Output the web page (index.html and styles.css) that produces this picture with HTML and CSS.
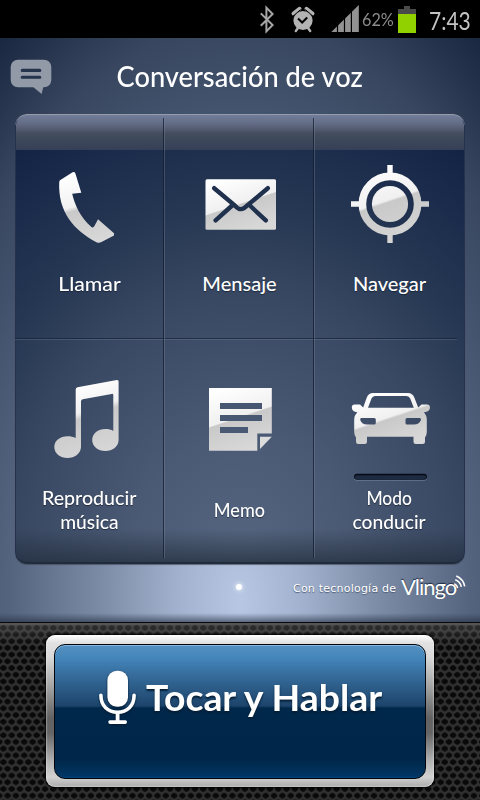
FILE: index.html
```html
<!DOCTYPE html>
<html lang="es">
<head>
<meta charset="utf-8">
<title>Conversación de voz</title>
<link rel="stylesheet" href="styles.css">
</head>
<body>
<div class="screen">
  <div class="status">
    <svg class="status-icons" viewBox="250 0 110 38" width="110" height="38">
      <path d="M260.8 13.4 272.6 25 266.4 31.4V7.6l6.2 6.4-11.8 11.8" fill="none" stroke="#a6a6a6" stroke-width="2"/>
      <circle cx="303" cy="20.5" r="9.6" fill="#b3b3b3"/>
      <path d="M293.5 13.5l6-4.7M312.5 13.5l-6-4.7" stroke="#b3b3b3" stroke-width="4" stroke-linecap="round"/>
      <path d="M292.7 16.5l8-7M313.3 16.5l-8-7" stroke="#000" stroke-width="1"/>
      <path d="M298 28l-2.2 3M308 28l2.2 3" stroke="#b3b3b3" stroke-width="2.4" stroke-linecap="round"/>
      <path d="M298 18.5l4.2 4 5-5" fill="none" stroke="#000" stroke-width="2"/>
      <path d="M331.3 32 358.8 5V32z" fill="#929292"/>
      <path d="M337.5 20V32M344.5 14V32M351.4 8V32" stroke="#000" stroke-width="1.2"/>
    </svg>
    <span class="percent"><span class="fit">62%</span></span>
    <svg class="battery" viewBox="398 5 18 27" width="18" height="27">
      <path d="M404 5h6v3h6v5h-18V8h6z" fill="#4a4a4a"/><path d="M398 13h18v19h-18z" fill="#91d100"/>
    </svg>
    <span class="clock"><span class="fit">7:43</span></span>
  </div>
  <div class="header">
    <svg class="bubble" viewBox="10 59 42 36" width="42" height="36">
      <path d="M18 59.7h26a7.3 7.3 0 0 1 7.3 7.3v13a7.3 7.3 0 0 1-7.3 7.3h-.8l-1.6 6.7-8.2-6.7H18a7.3 7.3 0 0 1-7.3-7.3V67a7.3 7.3 0 0 1 7.3-7.3z" fill="#929aa8"/>
      <path d="M22.2 70.4h17.6M22.2 77.3h17.6" stroke="#25344d" stroke-width="3.1" stroke-linecap="round"/>
    </svg>
    <h1 class="title"><span class="fit">Conversación de voz</span></h1>
  </div>
  <div class="panel">
    <div class="cell">
      <svg class="art" viewBox="15 114 150 146">
        <defs><linearGradient id="g1" gradientUnits="userSpaceOnUse" x1="78" y1="172" x2="96" y2="242"><stop offset="0" stop-color="#fff"/><stop offset=".45" stop-color="#f2f2f2"/><stop offset=".51" stop-color="#c9c9c9"/><stop offset="1" stop-color="#d8d8d8"/></linearGradient></defs>
        <path d="M60 180.3 72.6 172.2Q74.6 171.3 75.4 173.4L81.3 192.8 72.2 193.7C74.5 204 80.5 218 91.7 227.2Q93.3 228 94.3 226.3L98 219.3 114 233.2V235.4L101.5 242Q99 243.3 96.5 242.2C74 230.5 58 212 59.2 182.5Q59.2 181 60 180.3z" fill="url(#g1)"/>
      </svg>
      <div class="label"><span class="fit w-llamar">Llamar</span></div>
    </div>
    <div class="cell">
      <svg class="art" viewBox="165 114 150 146">
        <defs><linearGradient id="g2" gradientUnits="userSpaceOnUse" x1="232" y1="176" x2="250" y2="230"><stop offset="0" stop-color="#fff"/><stop offset=".5" stop-color="#f0f0f0"/><stop offset=".52" stop-color="#c9c9c9"/><stop offset="1" stop-color="#d8d8d8"/></linearGradient></defs>
        <rect x="205.5" y="179.2" width="70.5" height="50.6" rx="1.5" fill="url(#g2)"/>
        <path d="M214.2 188.2 235.2 205.8Q240.8 212.5 246.8 205.8L267.8 188.2M215.6 220.4 232.7 205M265.8 220.4 249.3 205" fill="none" stroke="#20314e" stroke-width="4.4" stroke-linecap="round"/>
      </svg>
      <div class="label"><span class="fit w-mensaje">Mensaje</span></div>
    </div>
    <div class="cell">
      <svg class="art" viewBox="315 114 150 146">
        <defs><linearGradient id="g3" gradientUnits="userSpaceOnUse" x1="378" y1="165" x2="402" y2="237"><stop offset="0" stop-color="#fff"/><stop offset=".48" stop-color="#f0f0f0"/><stop offset=".51" stop-color="#c9c9c9"/><stop offset="1" stop-color="#d4d4d4"/></linearGradient></defs>
        <circle cx="390" cy="204" r="27.6" fill="none" stroke="url(#g3)" stroke-width="7.6"/>
        <circle cx="390" cy="204" r="18.1" fill="url(#g3)"/>
        <path d="M387.3 165h5.4v9h-5.4zM387.3 234h5.4v9h-5.4zM351 201.3h9v5.4h-9zM420 201.3h9v5.4h-9z" fill="url(#g3)"/>
      </svg>
      <div class="label"><span class="fit w-navegar">Navegar</span></div>
    </div>
    <div class="cell">
      <svg class="art" viewBox="15 338 150 148">
        <defs><linearGradient id="g4" gradientUnits="userSpaceOnUse" x1="80" y1="384" x2="104" y2="456"><stop offset="0" stop-color="#fff"/><stop offset=".36" stop-color="#f0f0f0"/><stop offset=".44" stop-color="#c9c9c9"/><stop offset="1" stop-color="#d8d8d8"/></linearGradient></defs>
        <path d="M75.7 438V389.5Q75.7 387.7 77.5 387.2L116.8 380Q118.6 379.8 118.6 381.5V440C118.6 446.5 112.5 451 105.3 451S92.2 446.5 92.2 440 98 429 105.3 429C108.5 429 111.3 429.5 113.3 431V395.3Q113.3 393.6 111.6 393.9L82.7 399.3Q81 399.8 81 401.5V447C80.8 453.5 74.7 458 67.5 458S54.3 453.5 54.3 447 60.2 436.2 67.5 436.2C70.7 436.2 73.5 436.8 75.7 438z" fill="url(#g4)"/>
      </svg>
      <div class="label"><span class="fit w-reproducir">Reproducir</span><span class="fit w-musica">música</span></div>
    </div>
    <div class="cell">
      <svg class="art" viewBox="165 338 150 148">
        <defs><linearGradient id="g5" gradientUnits="userSpaceOnUse" x1="230" y1="386" x2="252" y2="452"><stop offset="0" stop-color="#fff"/><stop offset=".46" stop-color="#f0f0f0"/><stop offset=".48" stop-color="#c9c9c9"/><stop offset="1" stop-color="#dadada"/></linearGradient></defs>
        <path d="M209 388h62.8v45.5h-14.5v17.3H209zM220 403v6h42v-6zM220 415v6h42v-6zM220 427v6h28v-6z" fill-rule="evenodd" fill="url(#g5)"/>
        <path d="M260 436.7h11.8L260 449z" fill="#dcdcdc"/>
      </svg>
      <div class="label"><span class="fit w-memo">Memo</span></div>
    </div>
    <div class="cell">
      <svg class="art" viewBox="315 338 150 148">
        <defs><linearGradient id="g6" gradientUnits="userSpaceOnUse" x1="381" y1="392" x2="399" y2="446"><stop offset="0" stop-color="#fff"/><stop offset=".46" stop-color="#f0f0f0"/><stop offset=".5" stop-color="#c9c9c9"/><stop offset="1" stop-color="#d8d8d8"/></linearGradient></defs>
        <path fill-rule="evenodd" fill="url(#g6)" d="M363.2 407.5 366.8 397.5Q368.5 393 373 393H408Q412.5 393 414.3 397.5L418.2 407.5 421.5 404.5H427Q430 404.7 430 407.3 430 411.6 424 412.3L426 415.5Q426.8 417 426.8 420V432Q426.8 435 425 437.5V441.5Q425 444 422.5 444H416Q413.5 444 413.5 441.5V436.7H367V441.5Q367 444 364.5 444H358.3Q356 444 356 441.5V437.5Q354.2 435 354.2 432V420Q354.2 417 355 415.5L357.3 412.3Q351.8 411.6 351.8 407.3 351.8 404.7 354.7 404.5H360zM368 407.7H413.8L410.2 398.5Q409.2 396 406.5 396H375Q372.5 396 371.5 398.5zM361.3 418Q360 418 360.2 420 362 424.5 367 424.5H374.2Q375.8 424.5 375.8 423V419.5Q375.8 418 374.2 418zM407 418Q405.5 418 405.5 419.5V423Q405.5 424.5 407 424.5H414Q419 424.5 421 420 421 418 419.7 418z"/>
        <rect x="354" y="474.7" width="73" height="6" rx="3" fill="#69778f"/>
        <rect x="354" y="473.8" width="73" height="6" rx="3" fill="#060a12"/>
        <path d="M356 475.2h69q1.6 1 1 2.5-1 1.7-2.5 1.7h-66q-2 0-2.5-1.7-.5-1.5 1-2.5z" fill="#1d2a41"/>
      </svg>
      <div class="label"><span class="fit w-modo">Modo</span><span class="fit w-conducir">conducir</span></div>
    </div>
  </div>
  <div class="credits">
    <span class="page-dot"></span>
    <div class="brand">
      <span class="powered">Con tecnología de</span>
      <span class="vlingo">Vlingo</span>
      <svg class="waves" viewBox="453 574 12 16" width="12" height="16"><path d="M453.3 583.7q2.8 1.2 3.4 4.3M454.3 579.8q5 2 6 7M455.3 576q7 3 8.4 10.3" fill="none" stroke="#fff" stroke-width="1.5"/></svg>
    </div>
  </div>
  <div class="dock">
    <div class="bezel">
      <div class="talk">
        <svg class="mic" viewBox="98 669 39 57" width="39" height="57">
          <rect x="107.4" y="670.7" width="20.6" height="36" rx="9.5" fill="#fff"/>
          <path d="M100.9 695.3C100.9 706 108 712.2 117.5 712.2S134.1 706 134.1 695.3" fill="none" stroke="#fff" stroke-width="3.6" stroke-linecap="round"/>
          <path d="M115.7 712h3.8v8.3h6q1.5 0 1.5 1.8t-1.5 1.8h-15.7q-1.5 0-1.5-1.8t1.5-1.8h5.9z" fill="#fff"/>
        </svg>
        <span class="talk-text"><span class="fit">Tocar y Hablar</span></span>
      </div>
    </div>
  </div>
</div>
</body>
</html>
```
FILE: styles.css
```css
* { box-sizing: border-box; }

body { margin: 0; background: #000; }

.screen {
  width: 480px;
  height: 800px;
  overflow: hidden;
  display: flex;
  flex-direction: column;
  color: #fff;
  font-family: Lato, "Open Sans", sans-serif;
  background: radial-gradient(ellipse 370px 640px at 240px 600px, #b8c8e4 0%, #a2b1cd 17%, #7b8ba6 38%, #55647e 62%, #43526c 78%, #38475f 90%, #24334b 102%, #15243c 112%);
}

.fit { display: inline-block; white-space: nowrap; }

.status {
  height: 38px;
  flex: none;
  display: flex;
  align-items: center;
  padding-left: 250px;
  background: #000;
}
.status-icons { flex: none; }
.percent { width: 38px; flex: none; padding: 0 0 0 2px; font-size: 18px; line-height: 22px; color: #8c8c8c; }
.percent .fit { transform: scaleX(.9); transform-origin: left; }
.battery { flex: none; }
.clock { padding: 1px 0 0 13px; font-size: 25px; line-height: 30px; color: #c4c4c4; }
.clock .fit { transform: scaleX(.84); transform-origin: left; }

.header { height: 76px; flex: none; display: flex; padding: 21px 0 0 10px; }
.bubble { flex: none; }
.title { width: 376px; height: 36px; margin: -1px 0 0; text-align: center; font-size: 28px; line-height: 36px; font-weight: 500; }
.title .fit { transform: scaleX(.972); }

.panel {
  width: 450px;
  height: 450px;
  flex: none;
  margin-left: 15px;
  display: grid;
  grid-template-columns: repeat(3, 150px);
  grid-template-rows: 224px 226px;
  border-radius: 12px;
  overflow: hidden;
  background:
    linear-gradient(#737f9c 0, #626b84 10px, #434c5d 20px, #344057 36px, transparent 36px),
    linear-gradient(transparent 415px, rgba(34, 45, 60, .75) 450px),
    radial-gradient(ellipse 360px 440px at 225px 450px, #566680 0%, #4b5a74 30%, #3a4963 60%, #263753 82%, #1b2b4b 100%, #0f1f41 120%);
  box-shadow: inset 0 1px #969bab, inset 1px 0 #26314a, inset -1px 0 #26314a, inset 0 -2px #202b3b, 0 1px 1px rgba(60, 70, 90, .7);
}
.cell {
  background: linear-gradient(90deg, rgba(17, 26, 43, .72) 1px, rgba(123, 139, 165, .35) 1px) 100% 4px / 2px 100% no-repeat;
}
.cell:nth-child(3n) { background: none; }
.cell:nth-child(n+4) {
  background:
    linear-gradient(90deg, rgba(17, 26, 43, .72) 1px, rgba(123, 139, 165, .35) 1px) 100% 0 / 2px 220px no-repeat,
    linear-gradient(rgba(17, 26, 43, .6) 1px, rgba(123, 139, 165, .3) 1px) 0 0 / 100% 2px no-repeat;
}
.cell:nth-child(6) { background: linear-gradient(rgba(17, 26, 43, .6) 1px, rgba(123, 139, 165, .3) 1px) 0 0 / 142px 2px no-repeat; }
.art { display: block; width: 150px; height: 148px; }
.cell:nth-child(-n+3) .art { height: 146px; }
.label {
  width: 149px;
  height: 46px;
  display: flex;
  flex-direction: column;
  align-items: center;
  justify-content: center;
  font-size: 20px;
  line-height: 24px;
  font-weight: 500;
  text-shadow: 0 1px 1px rgba(10, 18, 35, .6);
}
.w-llamar { transform: scaleX(1.06); }
.w-reproducir { transform: scaleX(.98); }
.w-musica, .w-conducir { transform: scaleX(.96); }
.w-memo { transform: scaleX(.9); }
.w-modo { transform: scaleX(.87); }

.credits { height: 58px; flex: none; display: grid; grid-template-columns: 236px 7px 222px; justify-content: start; background: linear-gradient(transparent 49px, rgba(35, 45, 65, .6) 58px); }
.page-dot { grid-column: 2; width: 6px; height: 6px; margin-top: 20px; border-radius: 50%; background: #fff; box-shadow: 0 0 5px #fff; }
.brand { display: flex; padding: 9px 0 0 50px; white-space: nowrap; }
.powered { width: 108px; flex: none; font-family: "DejaVu Sans", sans-serif; font-size: 11px; line-height: 14px; padding-top: 9px; letter-spacing: .22px; text-shadow: 0 1px 1px #4d5971; }
.vlingo { width: 54px; flex: none; font-size: 22px; line-height: 28px; text-shadow: 0 -1px 1px #202b3e; letter-spacing: -1px; }
.waves { flex: none; margin-top: 1px; margin-left: -1px; }

.dock {
  flex: 1;
  padding: 12px 46px 0;
  border-top: 1px solid #08090a;
  box-shadow: inset 0 2px #555;
  background:
    linear-gradient(rgba(120, 120, 120, .38), transparent 22px),
    radial-gradient(ellipse 3.4px 2.9px at 50% 50%, #090909 82%, transparent 100%) -.8px -2px / 8.34px 13.44px,
    radial-gradient(ellipse 3.4px 2.9px at 50% 50%, #090909 82%, transparent 100%) 3.4px 4.7px / 8.34px 13.44px,
    #303030;
}
.bezel {
  height: 152px;
  padding: 9px 8px;
  border-radius: 9px;
  background: linear-gradient(#fff 0, #e1e1e1 8px, #d9d9d9 22px, #a7a7a7 50px, #626262 83px, #656565 98px, #b0b0b0 125px, #d2d2d2 142px, #aaa 152px);
  box-shadow: 0 0 2px 1px #000, inset 0 0 2px #fff;
}
.talk {
  height: 135px;
  display: flex;
  padding: 24px 0 0 43px;
  border: 1px solid #02060c;
  border-radius: 11px;
  background: linear-gradient(#5591c2 0, #4284b9 14px, #386f9f 28px, #1d446b 61px, #00284a 63px, #002749 115px, #003563 131px, #004f91 135px);
  box-shadow: inset 0 1px #86b7dc;
}
.mic { flex: none; filter: drop-shadow(0 1px 1px #041a30); }
.talk-text { padding: 5px 0 0 9px; font-size: 37px; line-height: 46px; font-weight: 700; text-shadow: 0 2px 2px #051e36; white-space: nowrap; }
.talk-text .fit { transform: scaleX(1.01); transform-origin: left; }
```
